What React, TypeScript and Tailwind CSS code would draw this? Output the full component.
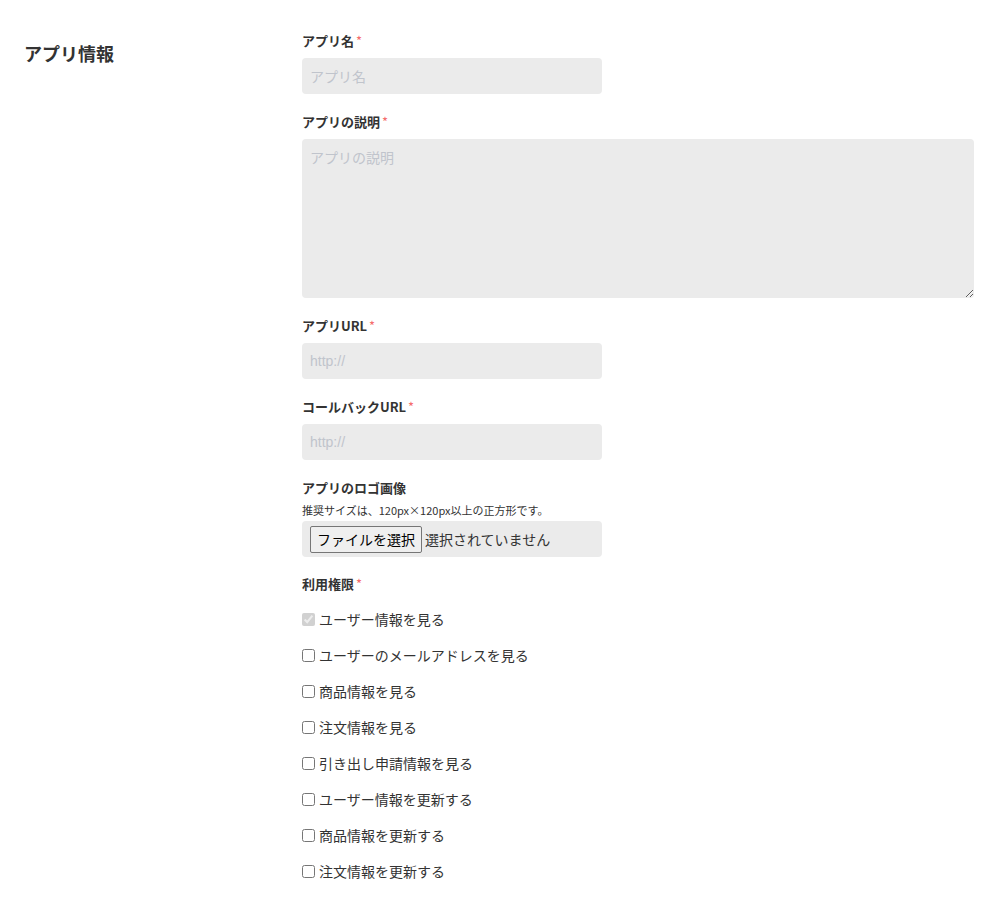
import React from 'react';

const font = { fontFamily: '"Noto Sans CJK JP", "Noto Sans", sans-serif' };

const permissions = [
  'ユーザー情報を見る',
  'ユーザーのメールアドレスを見る',
  '商品情報を見る',
  '注文情報を見る',
  '引き出し申請情報を見る',
  'ユーザー情報を更新する',
  '商品情報を更新する',
  '注文情報を更新する',
];

function Label({ text, required }: { text: string; required?: boolean }) {
  return (
    <label className="block text-[13px] font-bold leading-5 text-[#333]">
      {text}
      {required && <span className="ml-0.5 font-normal text-[#f56c6c]">*</span>}
    </label>
  );
}

const inputCls =
  'block h-9 w-[300px] rounded bg-[#ebebeb] px-2 text-sm text-[#333] outline-none placeholder:text-[#c0c4cc]';

export default function App() {
  return (
    <div className="flex min-h-screen bg-white pt-[31px]" style={font}>
      <div className="w-[302px] shrink-0 pl-6 pt-2">
        <h2 className="text-lg font-bold leading-7 text-[#333]">アプリ情報</h2>
      </div>

      <form className="flex-1 pr-[10px]">
        <div className="mb-[18px]">
          <Label text="アプリ名" required />
          <input className={`mt-[7px] ${inputCls}`} placeholder="アプリ名" />
        </div>

        <div className="mb-[18px]">
          <Label text="アプリの説明" required />
          <textarea
            className="mt-[7px] block h-[159px] w-full rounded bg-[#ebebeb] px-2 py-2 text-sm leading-5 text-[#333] outline-none placeholder:text-[#c0c4cc]"
            placeholder="アプリの説明"
          />
        </div>

        <div className="mb-[18px]">
          <Label text="アプリURL" required />
          <input className={`mt-[7px] ${inputCls}`} placeholder="http://" style={{ fontFamily: '"Liberation Sans", Arial, sans-serif' }} />
        </div>

        <div className="mb-[18px]">
          <Label text="コールバックURL" required />
          <input className={`mt-[7px] ${inputCls}`} placeholder="http://" style={{ fontFamily: '"Liberation Sans", Arial, sans-serif' }} />
        </div>

        <div className="mb-[17px]">
          <Label text="アプリのロゴ画像" />
          <p className="mt-1 text-[11px] leading-4 text-[#333]">推奨サイズは、120px×120px以上の正方形です。</p>
          <div className="mt-[3px] flex h-9 w-[300px] items-center rounded bg-[#ebebeb] pl-2">
            <button
              type="button"
              className="h-[27px] rounded-[2px] border border-[#767676] bg-[#efefef] px-[6px] text-sm text-black"
            >
              ファイルを選択
            </button>
            <span className="ml-[3px] text-sm text-[#333]">選択されていません</span>
          </div>
        </div>

        <div>
          <Label text="利用権限" required />
          <div className="mt-[7px]">
            {permissions.map((p, i) => (
              <label key={p} className="flex h-9 items-center text-sm text-[#333]">
                <input
                  type="checkbox"
                  defaultChecked={i === 0}
                  disabled={i === 0}
                  className="m-0 mr-[4px] h-[13px] w-[13px]"
                />
                {p}
              </label>
            ))}
          </div>
        </div>
      </form>
    </div>
  );
}
